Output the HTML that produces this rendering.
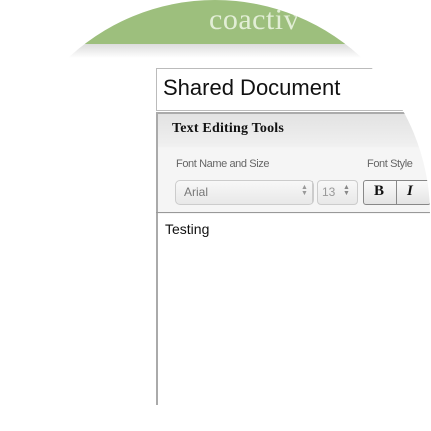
<!DOCTYPE html>
<html><head><style>
html,body{margin:0;padding:0;background:#fff;}
#wrap{position:relative;width:431px;height:431px;overflow:hidden;background:#fff;font-family:"Liberation Sans",sans-serif;}
#clip{position:absolute;left:0;top:0;width:431px;height:431px;clip-path:circle(215px at 215px 215px);}
.abs{position:absolute;}
</style></head><body>
<div id="wrap"><div id="clip">
  <div class="abs" style="left:0;top:44px;width:431px;height:14px;background:linear-gradient(#dcdcdc,#fff);"></div>
  <div class="abs" style="left:0;top:0;width:431px;height:44px;overflow:hidden;">
    <div class="abs" style="left:20px;top:-8px;width:394px;height:394px;border-radius:50%;background:#9dbf7d;"></div>
    <div class="abs" style="left:209px;top:3px;font-family:'Liberation Serif',serif;font-size:30px;color:#e2eed6;letter-spacing:0.5px;">coactiv</div>
  </div>
  <div class="abs" style="left:156px;top:68px;width:300px;height:41px;border:1px solid #bbb;border-right:none;background:#fff;"></div>
  <div class="abs" style="left:163px;top:75px;font-size:22px;color:#111;">Shared Document</div>
  <div class="abs" style="left:156px;top:112px;width:300px;height:100px;border-top:2px solid #aaa;border-left:2px solid #aaa;background:linear-gradient(#e2e2e2 0px,#f0f0f0 32px,#f5f5f5 34px,#f5f5f5 100%);"></div>
  <div class="abs" style="left:172px;top:121px;font-family:'Liberation Serif',serif;font-weight:bold;font-size:14px;color:#111;letter-spacing:0.2px;">Text Editing Tools</div>
  <div class="abs" style="left:176px;top:158px;font-size:11px;color:#666;letter-spacing:-0.4px;">Font Name and Size</div>
  <div class="abs" style="left:367px;top:158px;font-size:11px;color:#666;letter-spacing:-0.4px;">Font Style</div>
  <div class="abs" style="left:175px;top:180px;width:137px;height:23px;border:1px solid #ccc;border-radius:5px;background:linear-gradient(#f8f8f8,#e8e8e8);"></div>
  <div class="abs" style="left:184px;top:185px;font-size:12px;color:#777;">Arial</div>
  <div class="abs" style="left:301px;top:185px;font-size:7px;color:#999;line-height:6px;">▲<br>▼</div>
  <div class="abs" style="left:312px;top:181px;width:1px;height:22px;background:#ccc;"></div>
  <div class="abs" style="left:317px;top:180px;width:39px;height:23px;border:1px solid #ccc;border-radius:4px;background:linear-gradient(#f8f8f8,#e8e8e8);"></div>
  <div class="abs" style="left:322px;top:185px;font-size:12px;color:#999;">13</div>
  <div class="abs" style="left:343px;top:185px;font-size:7px;color:#888;line-height:6px;">▲<br>▼</div>
  <div class="abs" style="left:363px;top:180px;width:66px;height:23px;border:1px solid #888;border-radius:3px;background:linear-gradient(#fafafa,#e4e4e4);"></div>
  <div class="abs" style="left:396px;top:181px;width:1px;height:23px;background:#888;"></div>
  <div class="abs" style="left:374px;top:183px;font-family:'Liberation Serif',serif;font-weight:bold;font-size:15px;color:#111;">B</div>
  <div class="abs" style="left:407px;top:183px;font-family:'Liberation Serif',serif;font-weight:bold;font-style:italic;font-size:15px;color:#111;">I</div>
  <div class="abs" style="left:156px;top:212px;width:300px;height:1px;background:#999;"></div>
  <div class="abs" style="left:156px;top:213px;width:2px;height:192px;background:#aaa;"></div>
  <div class="abs" style="left:165px;top:221px;font-size:14px;color:#111;">Testing</div>
</div></div>
</body></html>
